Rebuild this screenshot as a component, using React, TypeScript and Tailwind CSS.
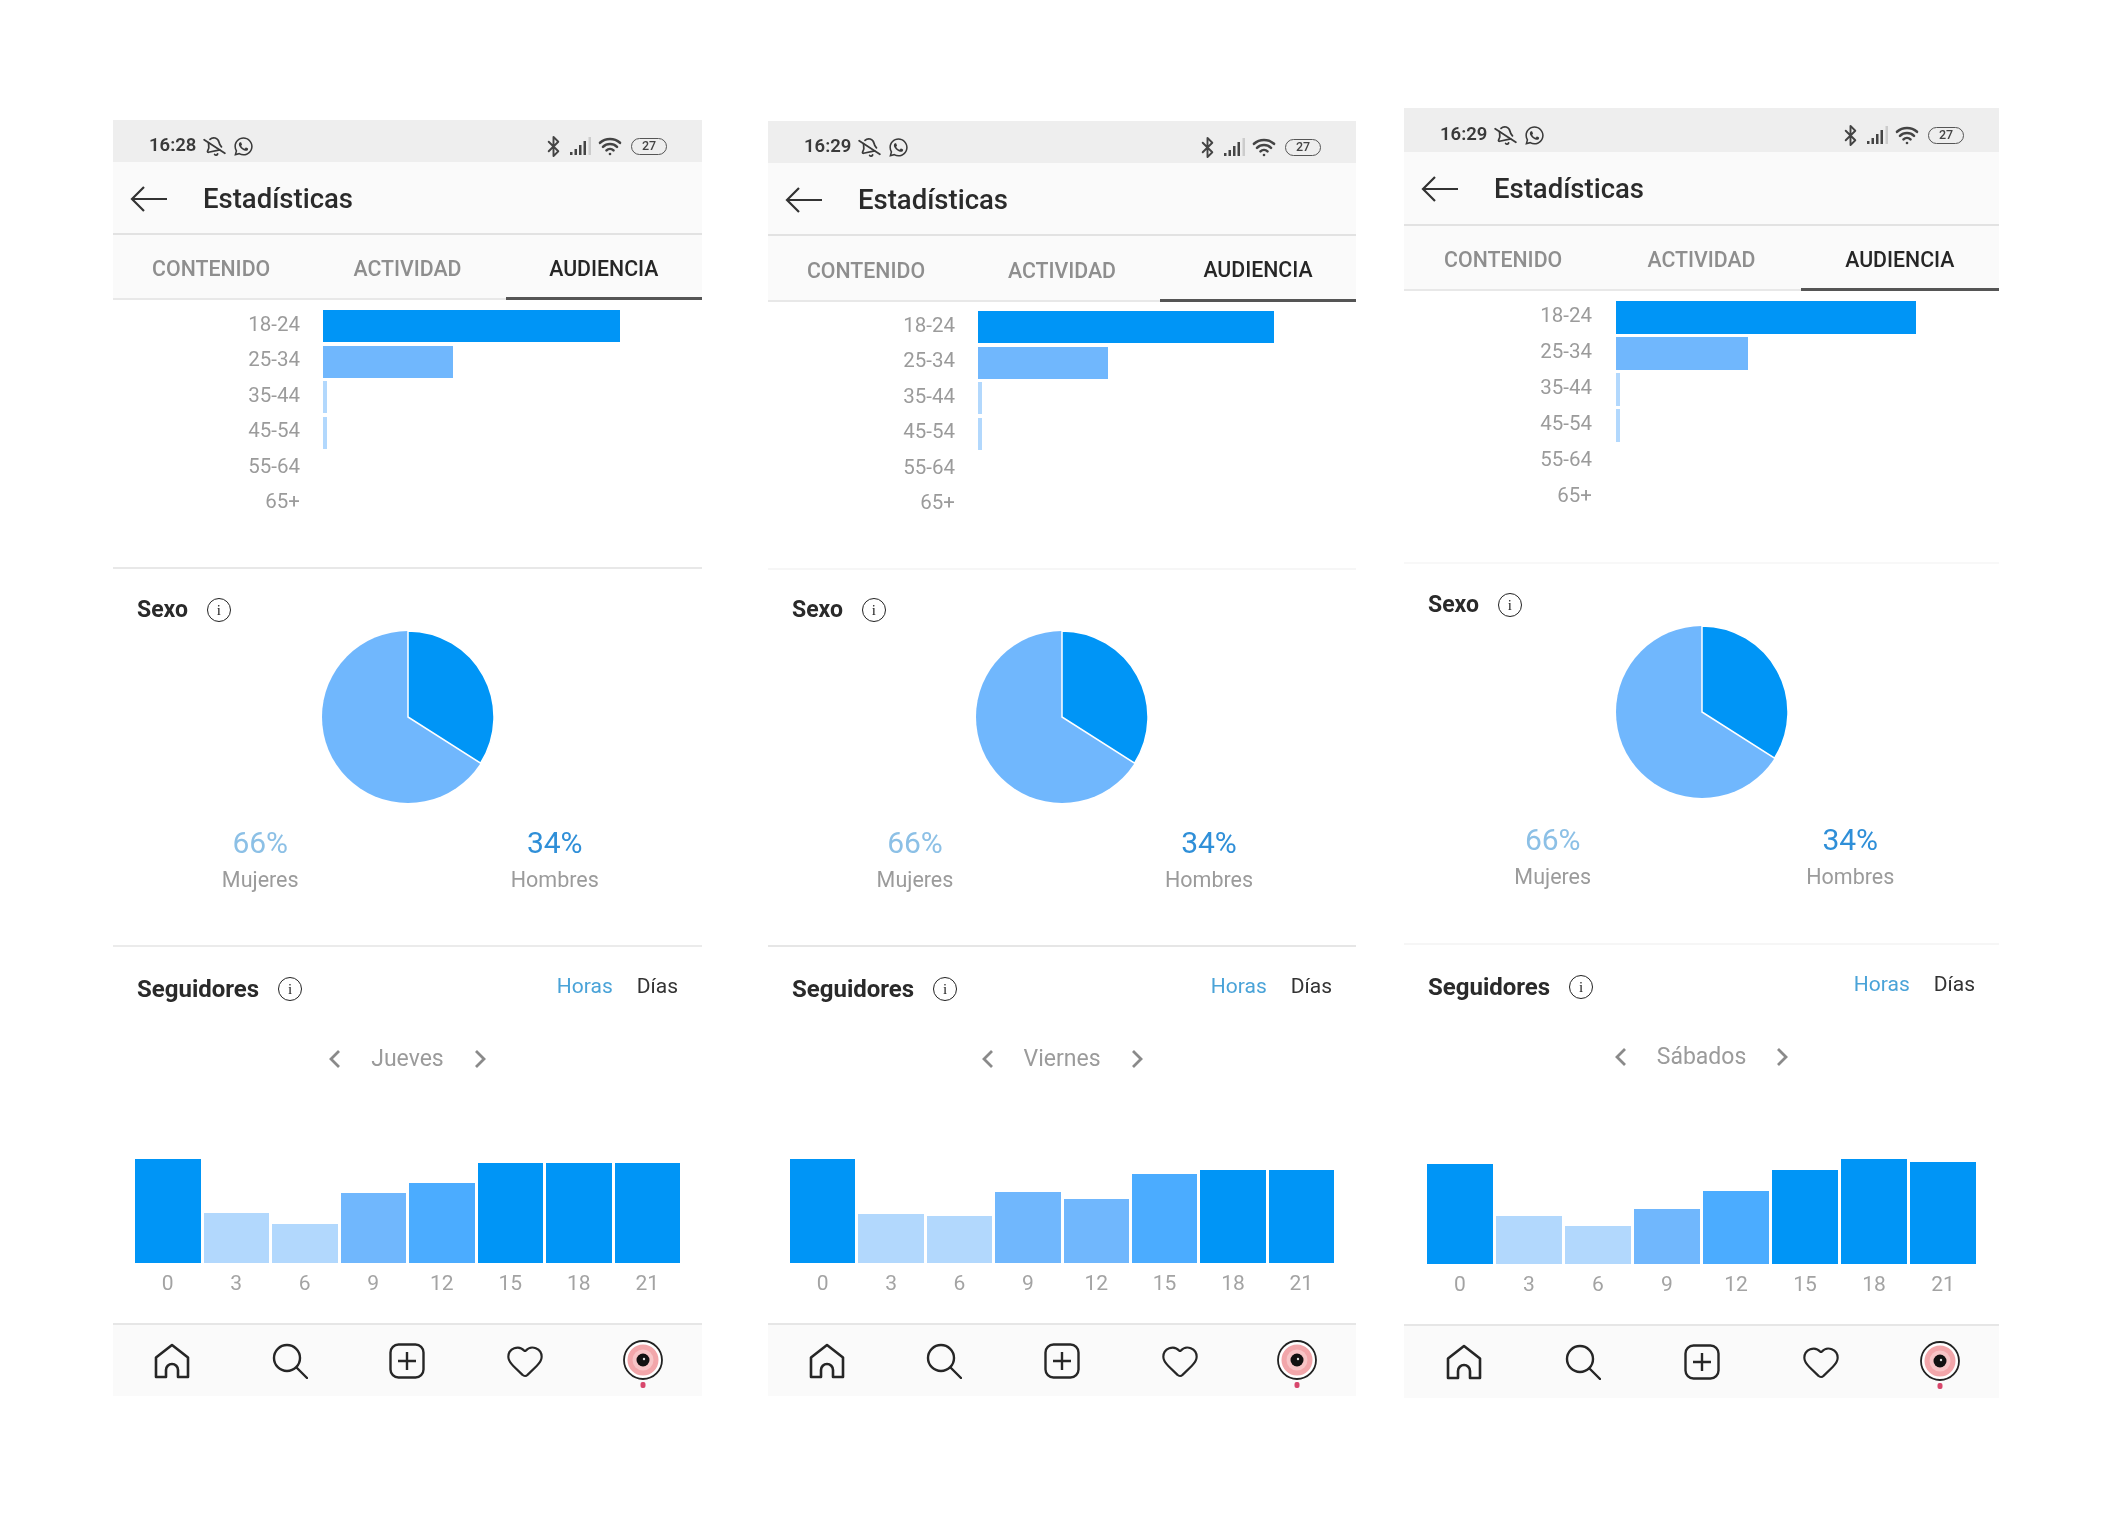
import { Bluetooth, BellOff, Heart, Wifi } from "lucide-react";
import { FaWhatsapp } from "react-icons/fa";

const DARK = "bg-[#0095f6]";
const MID = "bg-[#4bacff]";
const SOFT = "bg-[#70b7fd]";
const PALE = "bg-[#b2d8fd]";

const ages = ["18-24", "25-34", "35-44", "45-54", "55-64", "65+"];
const hours = ["0", "3", "6", "9", "12", "15", "18", "21"];

const phones = [
  {
    time: "16:28",
    day: "Jueves",
    frame: "w-[589px] ml-[113px] mt-[120px]",
    status: "h-[42px]",
    header: "h-[73px]",
    tabs: "h-[65px]",
    ageBlock: "h-[269px] pt-[10px] border-[#e8e8e8]",
    ageRow: "h-[35.5px]",
    ageBar: "h-[32px]",
    ageLabel: "w-[187px] mr-[23px]",
    ageWidths: [297, 130, 4, 4, 0, 0],
    sexBlock: "h-[378px] pt-[27px] border-[#ebebeb]",
    pie: "mt-[7px]",
    pct: "mt-[23px]",
    followBlock: "h-[376px] pt-[28px]",
    chartGap: "mt-[85px]",
    chartPad: "px-[22px]",
    nav: "h-[73px]",
    bars: [
      [104, DARK],
      [50, PALE],
      [39, PALE],
      [70, SOFT],
      [80, MID],
      [100, DARK],
      [100, DARK],
      [100, DARK],
    ],
  },
  {
    time: "16:29",
    day: "Viernes",
    frame: "w-[588px] ml-[66px] mt-[121px]",
    status: "h-[42px]",
    header: "h-[73px]",
    tabs: "h-[66px]",
    ageBlock: "h-[268px] pt-[9px] border-[#f6f6f6]",
    ageRow: "h-[35.5px]",
    ageBar: "h-[32px]",
    ageLabel: "w-[187px] mr-[23px]",
    ageWidths: [296, 130, 4, 4, 0, 0],
    sexBlock: "h-[377px] pt-[26px] border-[#e6e6e6]",
    pie: "mt-[7px]",
    pct: "mt-[23px]",
    followBlock: "h-[376px] pt-[28px]",
    chartGap: "mt-[85px]",
    chartPad: "px-[22px]",
    nav: "h-[73px]",
    bars: [
      [104, DARK],
      [49, PALE],
      [47, PALE],
      [71, SOFT],
      [64, SOFT],
      [89, MID],
      [93, DARK],
      [93, DARK],
    ],
  },
  {
    time: "16:29",
    day: "Sábados",
    frame: "w-[595px] ml-[48px] mt-[108px]",
    status: "h-[44px]",
    header: "h-[74px]",
    tabs: "h-[65px]",
    ageBlock: "h-[273px] pt-[10px] border-[#f8f8f8]",
    ageRow: "h-[36px]",
    ageBar: "h-[33px]",
    ageLabel: "w-[188px] mr-[24px]",
    ageWidths: [300, 132, 4, 4, 0, 0],
    sexBlock: "h-[381px] pt-[27px] border-[#f6f6f6]",
    pie: "mt-[7px]",
    pct: "mt-[25px]",
    followBlock: "h-[379px] pt-[28px]",
    chartGap: "mt-[88px]",
    chartPad: "px-[23px]",
    nav: "h-[74px]",
    bars: [
      [100, DARK],
      [48, PALE],
      [38, PALE],
      [55, SOFT],
      [73, MID],
      [94, DARK],
      [105, DARK],
      [102, DARK],
    ],
  },
] as const;

function Info() {
  return (
    <span className="flex h-[24px] w-[24px] items-center justify-center rounded-full border-[1.5px] border-[#222] text-[15px] leading-none text-[#222] [font-family:'Liberation_Serif',serif]">
      i
    </span>
  );
}

function Chevron({ right }: { right?: boolean }) {
  return (
    <svg width="12" height="20" viewBox="0 0 12 20" fill="none" stroke="#8a8a8a" strokeWidth="2.8">
      <path d={right ? "M2 2l8 8-8 8" : "M10 2l-8 8 8 8"} />
    </svg>
  );
}

function Signal() {
  return (
    <svg width="22" height="18" viewBox="0 0 22 18">
      <rect x="0" y="15" width="2.5" height="3" fill="#444" />
      <rect x="4.5" y="12" width="2.5" height="6" fill="#444" />
      <rect x="9" y="8" width="2.5" height="10" fill="#444" />
      <rect x="13.5" y="4" width="2.5" height="14" fill="#444" />
      <rect x="18.5" y="0" width="2.5" height="18" fill="#ccc" />
    </svg>
  );
}

function Avatar() {
  return (
    <svg width="40" height="50" viewBox="0 0 40 50">
      <ellipse cx="20" cy="20" rx="19" ry="19" fill="#fff" stroke="#222" strokeWidth="1.8" />
      <circle cx="20" cy="20" r="15.5" fill="#f2a6aa" />
      <circle cx="20" cy="20" r="10.5" fill="#f7c4c6" />
      <circle cx="20" cy="20" r="6.5" fill="#111" />
      <circle cx="21" cy="19" r="1.2" fill="#ddd" />
      <rect x="17.5" y="42" width="5" height="6" rx="2" fill="#d8476c" />
    </svg>
  );
}

function Phone({ p }: { p: (typeof phones)[number] }) {
  return (
    <div className={`${p.frame} shrink-0`}>
      {/* Status bar */}
      <div className={`${p.status} flex items-center justify-between bg-[#eeeeee] pl-[36px] pr-[35px] pt-[10px]`}>
        <div className="flex items-center gap-[8px] text-[#3a3a3a]">
          <span className="text-[18.5px] font-semibold">{p.time}</span>
          <BellOff size={21} strokeWidth={2} className="-rotate-12" />
          <FaWhatsapp size={21} />
        </div>
        <div className="flex items-center gap-[6px] text-[#444]">
          <Bluetooth size={23} strokeWidth={2} className="-mr-[1px]" />
          <Signal />
          <Wifi size={24} strokeWidth={2.6} className="mr-[3px]" />
          <div className="flex h-[17px] w-[36px] items-center justify-center rounded-full border-[1.5px] border-[#555] text-[12.5px] font-medium leading-none">
            27
          </div>
        </div>
      </div>

      {/* Header */}
      <div className={`${p.header} flex items-center border-b-2 border-[#e2e2e2] bg-[#fafafa] pl-[17px] pt-[2px]`}>
        <svg width="37" height="28" viewBox="0 0 37 28" fill="none" stroke="#333" strokeWidth="2.2">
          <path d="M2 14h35M14 2L2 14l12 12" />
        </svg>
        <span className="ml-[36px] text-[27.5px] font-medium text-[#2b2b2b]">Estadísticas</span>
      </div>

      {/* Tabs */}
      <div className={`${p.tabs} grid grid-cols-3 border-b-2 border-[#e8e8e8] bg-[#fafafa] text-center text-[21.3px] font-medium`}>
        <div className="flex items-center justify-center pt-[5px] text-[#8e8e8e]">CONTENIDO</div>
        <div className="flex items-center justify-center pt-[5px] text-[#8e8e8e]">ACTIVIDAD</div>
        <div className="-mb-[2px] flex items-center justify-center border-b-[3px] border-[#555] pt-[5px] text-[#262626]">AUDIENCIA</div>
      </div>

      {/* Age bars */}
      <div className={`${p.ageBlock} border-b-2`}>
        {ages.map((age, i) => (
          <div key={age} className={`${p.ageRow} flex items-start`}>
            <div className={`${p.ageLabel} ${p.ageBar} flex items-center justify-end pb-[4px] text-[20.5px] text-[#9b9b9b]`}>{age}</div>
            <div
              className={`${p.ageBar} ${i === 0 ? DARK : i === 1 ? SOFT : PALE}`}
              style={{ width: p.ageWidths[i] }}
            />
          </div>
        ))}
      </div>

      {/* Gender */}
      <div className={`${p.sexBlock} border-b-2`}>
        <div className="flex h-[28px] items-center pl-[24px]">
          <span className="text-[23px] font-bold text-[#2a2a2a]">Sexo</span>
          <span className="ml-[19px]">
            <Info />
          </span>
        </div>
        <div className={`${p.pie} flex justify-center`}>
          <svg width="172" height="172" viewBox="0 0 172 172">
            <circle cx="86" cy="86" r="86" fill="#70b7fd" />
            <path d="M86 86V0A86 86 0 0 1 158.6 132.1Z" fill="#0095f6" stroke="#fff" strokeWidth="1.5" />
          </svg>
        </div>
        <div className={`${p.pct} grid grid-cols-2 text-center`}>
          <div>
            <div className="h-[34px] text-[30px] leading-[34px] text-[#8cc0e6]">66%</div>
            <div className="mt-[6px] text-[21.5px] leading-[28px] text-[#9b9b9b]">Mujeres</div>
          </div>
          <div>
            <div className="h-[34px] text-[30px] leading-[34px] text-[#2f8fd8]">34%</div>
            <div className="mt-[6px] text-[21.5px] leading-[28px] text-[#9b9b9b]">Hombres</div>
          </div>
        </div>
      </div>

      {/* Followers */}
      <div className={p.followBlock}>
        <div className="flex h-[28px] items-center justify-between pl-[24px] pr-[24px]">
          <div className="flex items-center">
            <span className="text-[24px] font-bold text-[#2a2a2a]">Seguidores</span>
            <span className="ml-[19px]">
              <Info />
            </span>
          </div>
          <div className="-mt-[4px] flex gap-[24px] text-[21px]">
            <span className="text-[#4aa3d8]">Horas</span>
            <span className="text-[#333]">Días</span>
          </div>
        </div>
        <div className="mt-[42px] flex h-[28px] items-center justify-center gap-[30px] text-[23px] text-[#9b9b9b]">
          <Chevron />
          <span>{p.day}</span>
          <Chevron right />
        </div>
        <div className={`${p.chartGap} ${p.chartPad}`}>
          <div className="grid h-[105px] grid-cols-8 items-end gap-[3px]">
            {p.bars.map(([h, color], i) => (
              <div key={i} className={color} style={{ height: h }} />
            ))}
          </div>
          <div className="mt-[8px] grid grid-cols-8 gap-[3px] text-center text-[21px] leading-[24px] text-[#a3a3a3]">
            {hours.map((hour) => (
              <span key={hour}>{hour}</span>
            ))}
          </div>
        </div>
      </div>

      {/* Bottom nav */}
      <div className={`${p.nav} grid grid-cols-5 items-center justify-items-center border-t-2 border-[#e6e6e6] bg-[#fafafa]`}>
        <svg width="36" height="36" viewBox="0 0 36 36" fill="none" stroke="#262626" strokeWidth="2.6" strokeLinejoin="round">
          <path d="M2 34V14.5L18 2l16 12.5V34H24v-7a6 6 0 0 0-12 0v7z" />
        </svg>
        <svg width="36" height="36" viewBox="0 0 36 36" fill="none" stroke="#262626" strokeWidth="2.4" strokeLinecap="round">
          <circle cx="15" cy="15" r="13" />
          <path d="M24.5 24.5L35 35" />
        </svg>
        <svg width="36" height="36" viewBox="0 0 36 36" fill="none" stroke="#262626" strokeWidth="2.4">
          <rect x="1.5" y="1.5" width="33" height="33" rx="8" />
          <path d="M18 9v18M9 18h18" />
        </svg>
        <Heart size={40} strokeWidth={1.3} color="#262626" />
        <div className="mt-[8px]">
          <Avatar />
        </div>
      </div>
    </div>
  );
}

export default function App() {
  return (
    <div className="flex h-[1522px] w-[2126px] items-start overflow-hidden bg-white blur-[0.4px] [font-family:Roboto,'Liberation_Sans',sans-serif]">
      {phones.map((p) => (
        <Phone key={p.day} p={p} />
      ))}
    </div>
  );
}
